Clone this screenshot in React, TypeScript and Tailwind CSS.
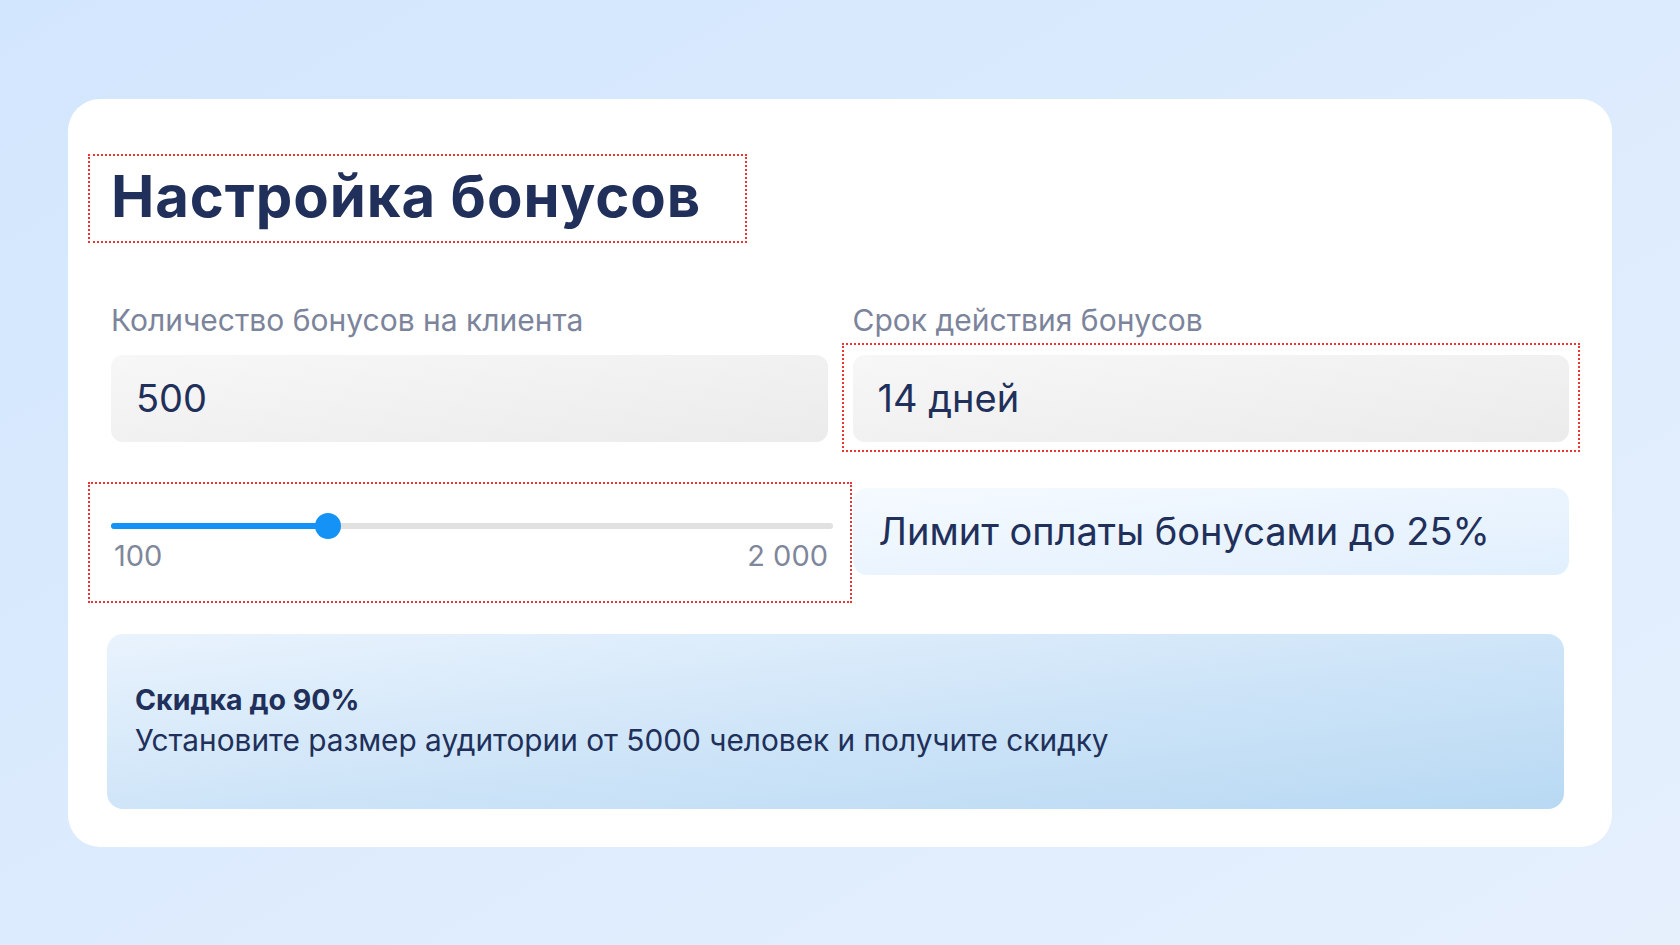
import React from 'react';

const navy = 'text-[#21305a]';

const DottedFrame: React.FC<{ className: string }> = ({ className }) => (
  <div className={`pointer-events-none absolute border-2 border-dotted border-[#ec3437] ${className}`} />
);

const FieldLabel: React.FC<{ children: React.ReactNode }> = ({ children }) => (
  <div className="text-[30px] leading-none text-[#7c849b]">{children}</div>
);

const InputBox: React.FC<{ value: string }> = ({ value }) => (
  <div className="h-[87px] rounded-[12px] bg-gradient-to-br from-[#f7f7f7] to-[#ebebeb] flex items-center pl-[25px]">
    <span className={`text-[38px] leading-none ${navy}`}>{value}</span>
  </div>
);

const BonusSlider: React.FC = () => {
  // thumb sits at ~30% of the track in the design
  const pct = 30;
  return (
    <div className="relative pt-[25px]">
      <DottedFrame className="-left-[23px] -top-[6px] w-[764px] h-[121px]" />
      <div className="relative h-[26px] w-[722px] flex items-center">
        <div className="h-[6px] w-full rounded-full bg-[#e1e1e1]" />
        <div className="absolute left-0 h-[6px] rounded-full bg-[#1592f6]" style={{ width: `${pct}%` }} />
        <div
          className="absolute h-[26px] w-[26px] -ml-[13px] rounded-full bg-[#1592f6]"
          style={{ left: `${pct}%` }}
        />
      </div>
      <div className="mt-[2px] flex justify-between text-[29px] leading-none text-[#7f879c] pl-[3px] pr-[5px] w-[722px]">
        <span>100</span>
        <span>2 000</span>
      </div>
    </div>
  );
};

export default function App() {
  return (
    <div
      className="min-h-screen w-full flex items-center justify-center bg-gradient-to-br from-[#d2e6fd] to-[#e6f0fd]"
      style={{ fontFamily: 'Inter, "Noto Sans", sans-serif' }}
    >
      <div className="w-[1544px] h-[748px] rounded-[32px] bg-white px-[43px] pt-[68px] pb-[38px] flex flex-col">
        <div className="relative">
          <DottedFrame className="-left-[23px] -top-[13px] w-[659px] h-[89px]" />
          <h1 className={`text-[58px] leading-none font-bold tracking-[0.9px] ${navy}`}>Настройка бонусов</h1>
        </div>

        <div className="mt-[80px] grid grid-cols-2 gap-x-[25px]">
          <div>
            <FieldLabel>Количество бонусов на клиента</FieldLabel>
            <div className="mt-[20px]">
              <InputBox value="500" />
            </div>
          </div>
          <div>
            <FieldLabel>Срок действия бонусов</FieldLabel>
            <div className="relative mt-[20px]">
              <DottedFrame className="-left-[11px] -top-[12px] w-[738px] h-[109px]" />
              <InputBox value="14 дней" />
            </div>
          </div>
        </div>

        <div className="mt-[46px] grid grid-cols-2 gap-x-[25px]">
          <BonusSlider />
          <div className="h-[87px] rounded-[14px] bg-gradient-to-br from-[#f5faff] to-[#e1effd] flex items-center pl-[26px]">
            <span className={`text-[38px] leading-none ${navy}`}>Лимит оплаты бонусами до 25%</span>
          </div>
        </div>

        <div className="mt-[59px] -ml-[4px] w-[1457px] h-[175px] rounded-[16px] bg-gradient-to-br from-[#e9f3fd] via-[#cfe5f8] to-[#b8d9f3] flex flex-col justify-center pl-[28px]">
          <div className={`text-[28.5px] leading-none font-bold ${navy}`}>Скидка до 90%</div>
          <div className={`mt-[12px] text-[29.8px] leading-none ${navy}`}>
            Установите размер аудитории от 5000 человек и получите скидку
          </div>
        </div>
      </div>
    </div>
  );
}
